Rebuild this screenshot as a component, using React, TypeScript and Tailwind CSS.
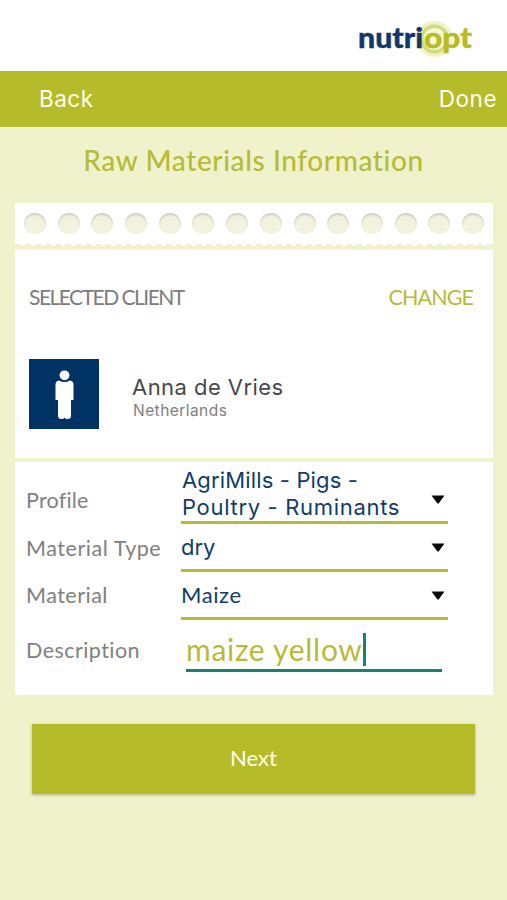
import React from 'react';

interface SelectFieldProps {
  label: string;
  labelClass: string;
  rowClass: string;
  arrowClass: string;
  children: React.ReactNode;
}

const punchHoles = Array.from({ length: 14 }, (_, i) => i);

const Logo: React.FC = () => (
  <svg width="122" height="44" viewBox="0 0 122 44" role="img" aria-label="nutriopt">
    <circle cx="80.5" cy="22" r="18" fill="#eff2cb" />
    <circle cx="80.5" cy="22" r="14.5" fill="#d5da7b" />
    <circle cx="80.5" cy="22" r="11" fill="#f4f6d8" />
    <g fontFamily="Lato, sans-serif" fontWeight="900" fontSize="29" strokeWidth="0.4">
      <text x="4" y="30.500" fill="#12386b" stroke="#12386b" textLength="65" lengthAdjust="spacingAndGlyphs">nutri</text>
      <text x="70" y="30.500" fill="#b6bc22" stroke="#b6bc22" textLength="48" lengthAdjust="spacingAndGlyphs">opt</text>
    </g>
  </svg>
);

const PersonIcon: React.FC = () => (
  <svg className="h-[70px] w-[70px] shrink-0 bg-[#003264]" viewBox="0 0 70 70" fill="#fff">
    <circle cx="35.5" cy="16.3" r="4.9" />
    <path d="M30 21.500 Q35.500 24.500 41 21.500 Q44.500 22 44.500 25.500 V41 H42 V57.500 Q41.500 60 38.500 60 Q36 60 35.500 58.500 Q35 60 32.500 60 Q29.500 60 29 57.500 V41 H26.500 V25.500 Q26.500 22 30 21.500 Z" />
  </svg>
);

const SelectField: React.FC<SelectFieldProps> = ({ label, labelClass, rowClass, arrowClass, children }) => (
  <div className={`flex ${rowClass}`}>
    <span className={`w-[155px] shrink-0 whitespace-nowrap font-[Lato] text-[21.500px] text-[#808080] ${labelClass}`}>
      {label}
    </span>
    <div className="flex w-[267px] items-center justify-between border-b-3 border-[#b5bb35] text-[#103c69]">
      {children}
      <svg width="14" height="9" viewBox="0 0 14 9" className={`mr-[3px] shrink-0 ${arrowClass}`}>
        <path d="M0.500 0.500 H13.500 L8 8 Q7 9 6 8 Z" fill="#080808" />
      </svg>
    </div>
  </div>
);

const App: React.FC = () => {
  return (
    <div className="flex h-[900px] w-[507px] flex-col overflow-hidden bg-[#f0f2cb] font-[Inter,sans-serif]">
      <header className="flex h-[71px] shrink-0 justify-end bg-white pt-[17px] pr-[31px]">
        <Logo />
      </header>

      <nav className="flex h-14 shrink-0 items-center justify-between bg-[#b6bb2a] pr-[10px] pl-[39px] text-[22.500px] text-[#fffff0]">
        <button className="tracking-[0.500px]">Back</button>
        <button className="tracking-[0.500px]">Done</button>
      </nav>

      <h1 className="h-[76px] shrink-0 pt-[14px] text-center font-[Lato] text-[28px] leading-[38px] font-medium tracking-[0.600px] whitespace-nowrap text-[#b6bb38]">
        Raw Materials Information
      </h1>

      <main className="mx-[15px] w-[478px]">
        {/* Perforated strip */}
        <div className="flex h-[43px] justify-between border-b-2 border-dashed border-[#eef0d8] bg-white px-[9px] pt-[10px]">
          {punchHoles.map((i) => (
            <span
              key={i}
              className="h-[21px] w-[22px] rounded-full bg-[#f2f2df] shadow-[inset_0_2px_2px_#d0d0c5]"
            />
          ))}
        </div>

        {/* Client */}
        <section className="mt-1 h-[208px] bg-white px-[14px] pt-[33px]">
          <div className="flex h-[76px] justify-between font-[Lato] text-[21px] leading-[28px]">
            <h2 className="tracking-[-1.500px] text-[#7c7c7c]">SELECTED CLIENT</h2>
            <button className="mr-[6px] h-7 text-[21.500px] tracking-[-0.900px] text-[#b6bb38]">CHANGE</button>
          </div>
          <div className="flex">
            <PersonIcon />
            <div className="ml-[33px] pt-[14px]">
              <p className="text-[22px] leading-[28px] tracking-[0.450px] text-[#484848]">Anna de Vries</p>
              <p className="pl-[1px] text-[15.500px] leading-[19px] tracking-[0.450px] text-[#808080]">Netherlands</p>
            </div>
          </div>
        </section>

        {/* Material form */}
        <section className="mt-1 h-[233px] bg-white pl-[11px]">
          <SelectField label="Profile" rowClass="h-[62px]" labelClass="pt-[22px] tracking-[0.200px]" arrowClass="mt-[16px]">
            <span className="pt-[4px] pl-[1px] text-[22px] leading-[27px]">
              <span className="tracking-[0.150px]">AgriMills - Pigs -</span>
              <br />
              <span className="tracking-[0.680px]">Poultry - Ruminants</span>
            </span>
          </SelectField>
          <SelectField label="Material Type" rowClass="h-12" labelClass="pt-[8px] tracking-[0.550px]" arrowClass="mt-[2px]">
            <span className="pt-[2px] text-[22px]">dry</span>
          </SelectField>
          <SelectField label="Material" rowClass="h-12" labelClass="pt-[7px] tracking-[0.500px]" arrowClass="mt-[2px]">
            <span className="font-[Lato] text-[22px] tracking-[0.600px]">Maize</span>
          </SelectField>
          <div className="flex h-[52px]">
            <span className="w-[160px] shrink-0 pt-[14px] font-[Lato] text-[21.500px] tracking-[0.450px] text-[#808080]">
              Description
            </span>
            <div className="flex w-[256px] items-center border-b-3 border-[#168371] pt-[10px] font-[Lato] text-[30px] text-[#b6bb38]">
              <span className="-mt-px whitespace-nowrap tracking-[0.700px]">maize yellow</span>
              <span className="h-[33px] w-[3px] bg-[#168371]" />
            </div>
          </div>
        </section>

        <button className="mt-[29px] ml-[17px] h-[70px] w-[443px] bg-[#b6bb2a] pb-[3px] font-[Lato] text-[22px] text-[#fffff0] shadow-[0_1px_3px_#afb18a]">
          Next
        </button>
      </main>
    </div>
  );
};

export default App;
